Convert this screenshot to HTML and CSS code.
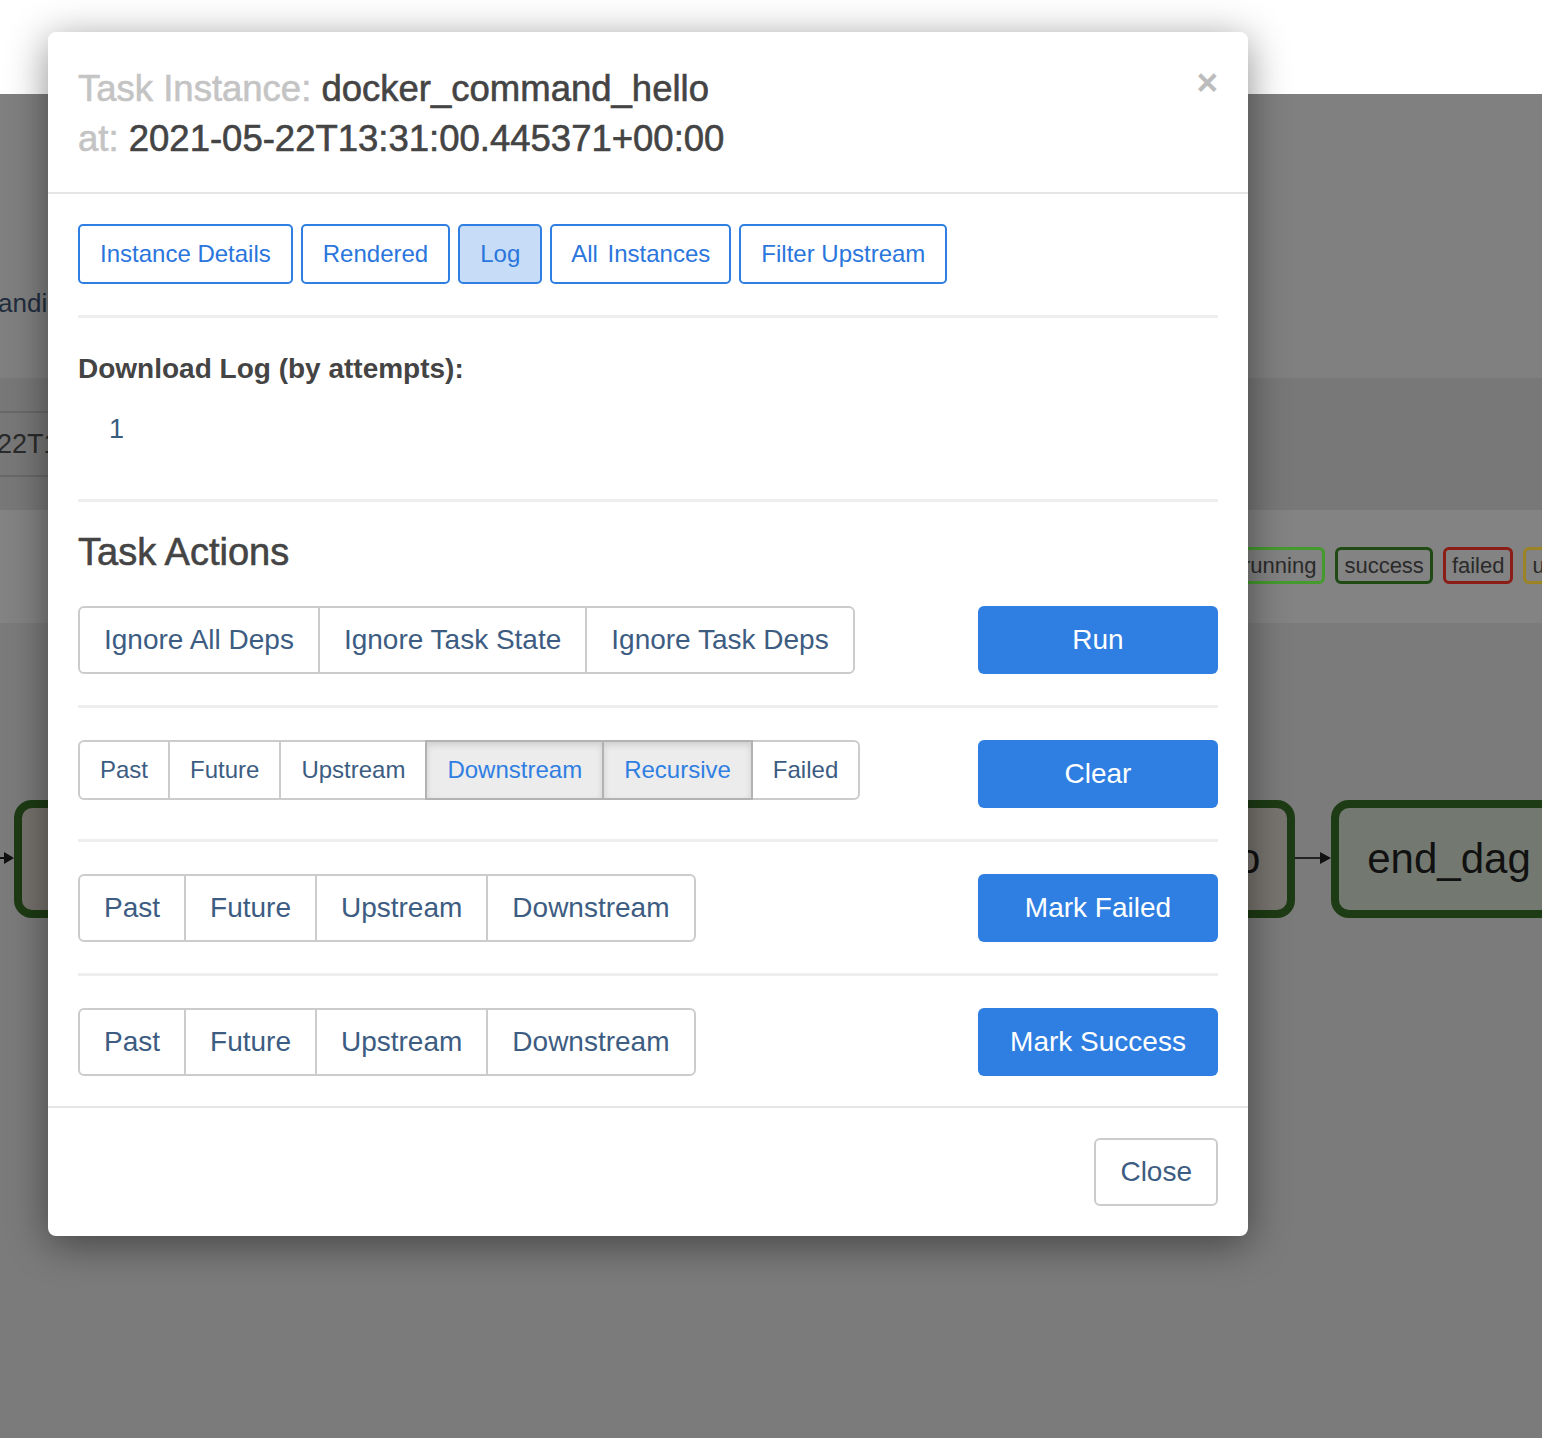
FILE: index.html
```html
<!DOCTYPE html>
<html lang="en">
<head>
<meta charset="utf-8">
<title>Task Instance</title>
<link rel="stylesheet" href="styles.css">
</head>
<body>
<div class="page">
  <div class="topbar"></div>
  <div class="band band-a"><span class="bg-text">andin</span></div>
  <div class="band band-b"><div class="date-box">22T1</div></div>
  <div class="band band-c">
    <div class="legend">
      <span class="state running">running</span>
      <span class="state success">success</span>
      <span class="state failed">failed</span>
      <span class="state upstream">upstream_failed</span>
    </div>
  </div>
  <div class="graph">
    <svg class="edges" width="1542" height="300" viewBox="0 0 1542 300">
      <line x1="0" y1="235" x2="6" y2="235" stroke="#111" stroke-width="2"/>
      <polygon points="4,229 14,235 4,241" fill="#111"/>
      <line x1="1295" y1="235" x2="1322" y2="235" stroke="#222" stroke-width="2"/>
      <polygon points="1320,229 1331,235 1320,241" fill="#111"/>
    </svg>
    <div class="node node-left">start</div>
    <div class="node node-hello">docker_command_hello</div>
    <div class="node node-end">end_dag</div>
  </div>
</div>

<div class="modal">
  <div class="modal-header">
    <button class="close" type="button">×</button>
    <h4 class="modal-title"><span class="muted">Task Instance:</span> docker_command_hello<br><span class="muted">at:</span> 2021-05-22T13:31:00.445371+00:00</h4>
  </div>
  <div class="modal-body">
    <div class="tabs">
      <a class="tab">Instance Details</a>
      <a class="tab">Rendered</a>
      <a class="tab active">Log</a>
      <a class="tab wide-space">All Instances</a>
      <a class="tab">Filter Upstream</a>
    </div>
    <hr class="sep">
    <h5 class="dl-title">Download Log (by attempts):</h5>
    <ul class="attempts"><li><a class="attempt">1</a></li></ul>
    <hr class="sep sep-after-log">
    <h4 class="actions-title">Task Actions</h4>

    <div class="action-row">
      <div class="btn-group">
        <button class="gbtn">Ignore All Deps</button>
        <button class="gbtn">Ignore Task State</button>
        <button class="gbtn">Ignore Task Deps</button>
      </div>
      <button class="btn-primary">Run</button>
    </div>
    <hr class="sep">
    <div class="action-row">
      <div class="btn-group small">
        <button class="gbtn">Past</button>
        <button class="gbtn">Future</button>
        <button class="gbtn">Upstream</button>
        <button class="gbtn active">Downstream</button>
        <button class="gbtn active">Recursive</button>
        <button class="gbtn">Failed</button>
      </div>
      <button class="btn-primary">Clear</button>
    </div>
    <hr class="sep">
    <div class="action-row">
      <div class="btn-group">
        <button class="gbtn">Past</button>
        <button class="gbtn">Future</button>
        <button class="gbtn">Upstream</button>
        <button class="gbtn">Downstream</button>
      </div>
      <button class="btn-primary">Mark Failed</button>
    </div>
    <hr class="sep">
    <div class="action-row">
      <div class="btn-group">
        <button class="gbtn">Past</button>
        <button class="gbtn">Future</button>
        <button class="gbtn">Upstream</button>
        <button class="gbtn">Downstream</button>
      </div>
      <button class="btn-primary">Mark Success</button>
    </div>
  </div>
  <div class="modal-footer">
    <button class="btn-default">Close</button>
  </div>
</div>
</body>
</html>
```
FILE: styles.css
```css
* { box-sizing: border-box; }
html, body { margin: 0; padding: 0; }
body {
  width: 1542px;
  height: 1438px;
  overflow: hidden;
  position: relative;
  background: #7b7b7b;
  font-family: "Liberation Sans", Arial, Helvetica, sans-serif;
}

/* dimmed page behind the modal */
.page { width: 1542px; }
.topbar { height: 94px; background: #fff; }
.band { width: 100%; overflow: hidden; }
.band-a { height: 284px; background: #808080; padding-top: 194px; }
.bg-text {
  display: block;
  margin-left: -2px;
  font-size: 26px;
  line-height: 30px;
  color: #1f2d3d;
  white-space: nowrap;
}
.band-b { height: 132px; background: #787878; padding-top: 33px; }
.date-box {
  height: 66px;
  width: 220px;
  border-top: 2px solid #696969;
  border-bottom: 2px solid #696969;
  border-right: 2px solid #696969;
  margin-left: -3px;
  font-size: 27px;
  line-height: 62px;
  color: #2a2a2a;
}
.band-c {
  height: 113px;
  background: #838383;
  display: flex;
  align-items: center;
}
.legend {
  display: flex;
  gap: 10px;
  padding-left: 1234px;
  margin-top: -2px;
  white-space: nowrap;
}
.state {
  height: 37px;
  padding: 0 6px;
  border: 3px solid #555;
  border-radius: 6px;
  font-size: 22px;
  line-height: 31px;
  color: #2a2a2a;
}
.state.running { border-color: #459a2e; }
.state.success { border-color: #1f4a14; }
.state.failed { border-color: #8c1d16; }
.state.upstream { border-color: #9c8424; }

.graph {
  position: relative;
  height: 815px;
  background: #7b7b7b;
}
.edges { position: absolute; left: 0; top: 0; }
.node {
  position: absolute;
  top: 177px;
  height: 118px;
  border: 8px solid #1d3b14;
  border-radius: 18px;
  font-size: 42px;
  line-height: 102px;
  color: #111;
  white-space: nowrap;
  text-align: center;
}
.node-left { left: 14px; width: 300px; background: #76726d; }
.node-hello { left: 780px; width: 515px; background: #78746f; }
.node-end { left: 1331px; width: 236px; background: #737970; }

/* modal */
.modal {
  position: absolute;
  top: 32px;
  left: 48px;
  width: 1200px;
  background: #fff;
  border-radius: 8px;
  box-shadow: 0 8px 40px rgba(0, 0, 0, 0.45);
  color: #444;
}
.modal-header {
  position: relative;
  padding: 32px 30px 28px;
  border-bottom: 2px solid #e5e5e5;
}
.modal-title {
  margin: 0;
  font-size: 36.5px;
  line-height: 50px;
  font-weight: normal;
  color: #444;
  -webkit-text-stroke: 0.6px #444;
}
.muted {
  color: #c4c4c4;
  -webkit-text-stroke-color: #c4c4c4;
}
.close {
  position: absolute;
  top: 33px;
  right: 30px;
  height: 36px;
  padding: 0;
  border: 0;
  background: none;
  font-family: inherit;
  font-size: 37px;
  font-weight: bold;
  line-height: 36px;
  color: #bcbcbc;
}

.modal-body { padding: 30px; }
.tabs { display: flex; gap: 8px; }
.tab {
  height: 60px;
  padding: 0 20px;
  border: 2px solid #2f7fe2;
  border-radius: 5px;
  font-size: 24px;
  line-height: 56px;
  color: #2a76dc;
  white-space: nowrap;
}
.tab.active { background: #c7dcf6; }
.tab.wide-space { word-spacing: 3px; padding: 0 19px; }

.sep {
  border: 0;
  border-top: 3px solid #eeeeee;
  height: 0;
  margin: 31px 0 32px;
}
.dl-title {
  margin: -1px 0 0;
  font-size: 28px;
  line-height: 40px;
  font-weight: bold;
  color: #444;
}
.attempts {
  list-style: none;
  margin: 20px 0 0;
  padding-left: 31px;
}
.attempt {
  font-size: 27px;
  line-height: 40px;
  color: #3b5a80;
}
.sep-after-log { margin-top: 50px; margin-bottom: 30px; }
.actions-title {
  margin: 0 0 34px;
  font-size: 38px;
  line-height: 40px;
  font-weight: normal;
  color: #444;
  -webkit-text-stroke: 0.6px #444;
}

.action-row {
  display: flex;
  justify-content: space-between;
  align-items: flex-start;
}
.btn-group { display: flex; }
.gbtn {
  height: 68px;
  margin: 0 0 0 -2px;
  padding: 0 24px;
  border: 2px solid #cccccc;
  border-radius: 0;
  background: #fff;
  font-family: inherit;
  font-size: 28px;
  line-height: 64px;
  color: #3d5c82;
  white-space: nowrap;
}
.gbtn:first-child { margin-left: 0; border-radius: 6px 0 0 6px; }
.gbtn:last-child { border-radius: 0 6px 6px 0; }
.btn-group.small .gbtn {
  height: 60px;
  padding: 0 20px;
  font-size: 24px;
  line-height: 56px;
}
.gbtn.active {
  position: relative;
  background: #ececec;
  border-color: #b2b2b2;
  box-shadow: inset 0 3px 6px rgba(0, 0, 0, 0.13);
  color: #2f7fe2;
}
.btn-primary {
  width: 240px;
  height: 68px;
  padding: 0;
  border: 0;
  border-radius: 6px;
  background: #2f7fe3;
  font-family: inherit;
  font-size: 28px;
  color: #fff;
}

.modal-footer {
  padding: 30px;
  border-top: 2px solid #e5e5e5;
  display: flex;
  justify-content: flex-end;
}
.btn-default {
  height: 68px;
  padding: 0 24px;
  border: 2px solid #cccccc;
  border-radius: 6px;
  background: #fff;
  font-family: inherit;
  font-size: 28px;
  color: #3d5c82;
}
```
